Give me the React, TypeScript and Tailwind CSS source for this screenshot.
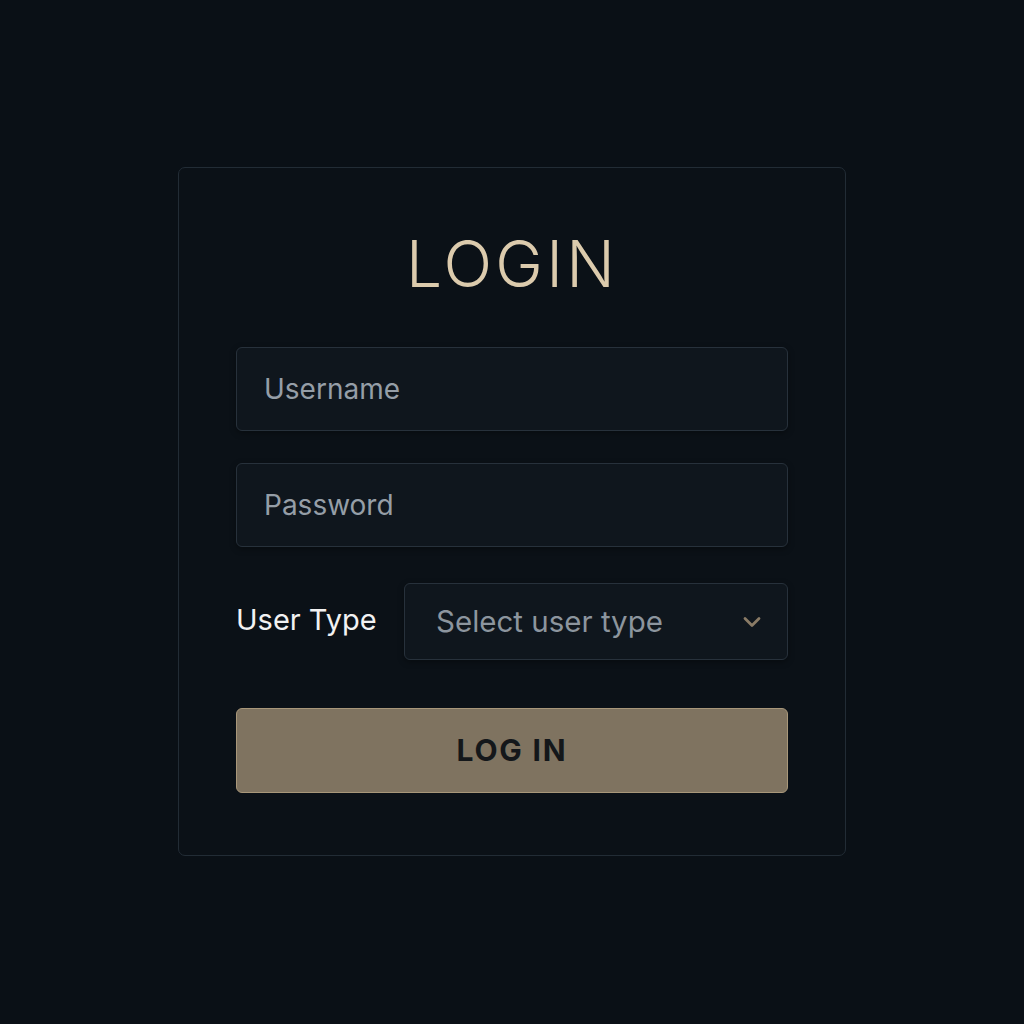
import { ChevronDown } from 'lucide-react';

export default function App() {
  return (
    <div
      className="min-h-screen w-full bg-[#0a1016] pt-[167px]"
      style={{ fontFamily: 'Inter, "Noto Sans", sans-serif' }}
    >
      {/* Card */}
      <div className="mx-auto w-[668px] h-[689px] rounded-[7px] border border-[#222c35] bg-[#0b1117] px-[57px] pt-[64px]">
        <h1 className="text-center text-[64px] leading-none font-light tracking-[0.05em] text-[#dccbad]">
          LOGIN
        </h1>

        <div className="mt-[51px] flex flex-col">
          <div className="h-[84px] rounded-[6px] border border-[#27313b] bg-[#0f161d] flex items-center px-[27px] shadow-[0_2px_6px_rgba(0,0,0,0.35)]">
            <span className="text-[28px] text-[#959ea7]">Username</span>
          </div>

          <div className="mt-[32px] h-[84px] rounded-[6px] border border-[#27313b] bg-[#0f161d] flex items-center px-[27px] shadow-[0_2px_6px_rgba(0,0,0,0.35)]">
            <span className="text-[28px] text-[#959ea7]">Password</span>
          </div>

          <div className="mt-[36px] flex items-center">
            <span className="w-[168px] text-[29px] text-[#f2f2f2] -mt-[4px]">User Type</span>
            <div className="flex-1 h-[77px] rounded-[6px] border border-[#27313b] bg-[#0f161d] flex items-center justify-between pl-[31px] pr-[21px] shadow-[0_2px_6px_rgba(0,0,0,0.35)]">
              <span className="text-[29.5px] text-[#8c959e]">Select user type</span>
              <ChevronDown className="w-[28px] h-[28px] text-[#8a7b66]" strokeWidth={2.4} />
            </div>
          </div>

          <button className="mt-[48px] h-[85px] rounded-[6px] border border-[#a8977a] bg-[#7f7360] flex items-center justify-center">
            <span className="text-[30px] font-bold tracking-[0.06em] text-[#14171a]">LOG IN</span>
          </button>
        </div>
      </div>
    </div>
  );
}
